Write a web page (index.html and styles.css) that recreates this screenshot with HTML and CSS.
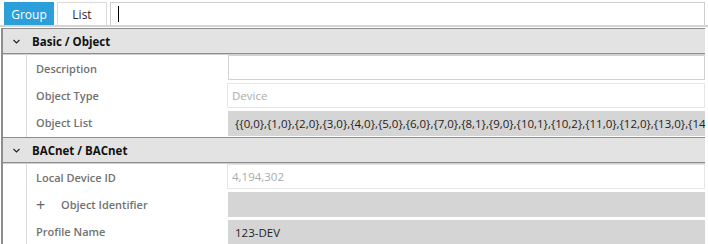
FILE: index.html
```html
<!DOCTYPE html>
<html lang="en">
<head>
    <meta charset="UTF-8">
    <title>Device Properties</title>
    <link rel="stylesheet" href="styles.css">
</head>
<body>
    <div class="toolbar">
        <div class="tab active">Group</div>
        <div class="tab">List</div>
        <div class="search"><span class="caret"></span></div>
    </div>

    <div class="panel">
        <!-- Basic / Object -->
        <div class="section-head">
            <svg class="chevron" width="7" height="5" viewBox="0 0 7 5"><path d="M0.5 1 L3.5 4 L6.5 1" fill="none" stroke="#222" stroke-width="1.1"/></svg>
            <span>Basic / Object</span>
        </div>
        <div class="rows">
            <div class="row">
                <div class="label">Description</div>
                <div class="field edit"></div>
            </div>
            <div class="row">
                <div class="label">Object Type</div>
                <div class="field readonly">Device</div>
            </div>
            <div class="row">
                <div class="label">Object List</div>
                <div class="field gray">{{0,0},{1,0},{2,0},{3,0},{4,0},{5,0},{6,0},{7,0},{8,1},{9,0},{10,1},{10,2},{11,0},{12,0},{13,0},{14,0},{15,0},{16,0},{17,0}}</div>
            </div>
        </div>

        <!-- BACnet / BACnet -->
        <div class="section-head">
            <svg class="chevron" width="7" height="5" viewBox="0 0 7 5"><path d="M0.5 1 L3.5 4 L6.5 1" fill="none" stroke="#222" stroke-width="1.1"/></svg>
            <span>BACnet / BACnet</span>
        </div>
        <div class="rows">
            <div class="row">
                <div class="label">Local Device ID</div>
                <div class="field readonly">4,194,302</div>
            </div>
            <div class="row">
                <div class="label"><span class="plus">+</span>Object Identifier</div>
                <div class="field gray"></div>
            </div>
            <div class="row">
                <div class="label">Profile Name</div>
                <div class="field gray">123-DEV</div>
            </div>
        </div>
    </div>
</body>
</html>
```

FILE: styles.css
```css
body {
    margin: 0;
    font-family: "Open Sans", "Noto Sans", Arial, sans-serif;
    font-size: 11px;
    background-color: #fff;
    color: #222;
    overflow: hidden;
}

.toolbar {
    display: flex;
    gap: 3px;
    height: 27px;
    padding: 2px 3px 0 4px;
    box-sizing: border-box;
    border-bottom: 2px solid #d4d4d4;
}

.tab {
    width: 50px;
    height: 23px;
    box-sizing: border-box;
    display: flex;
    align-items: center;
    justify-content: center;
    border: 1px solid #dadada;
    border-bottom: none;
    font-size: 12px;
    color: #3a2222;
}

.tab.active {
    background-color: #2b9fd9;
    border-color: #2b9fd9;
    color: #fff;
}

.search {
    flex: 1;
    height: 23px;
    box-sizing: border-box;
    border: 1px solid #cfcfcf;
    border-bottom: none;
    padding: 3px 0 0 7px;
}

.caret {
    display: block;
    width: 1px;
    height: 16px;
    background-color: #000;
}

.panel {
    margin: 1px 3px 0 1px;
    border-left: 2px solid #8d8d8d;
}

.section-head {
    display: flex;
    align-items: center;
    height: 24px;
    background-color: #e3e3e3;
    border-top: 1px solid #8d8d8d;
    border-bottom: 1px solid #8d8d8d;
    box-shadow: 0 1px 0 #cfcfcf;
    font-size: 11.5px;
    font-weight: 700;
    color: #111;
}

.chevron {
    margin: 1px 12px 0 10px;
}

.rows {
    display: flex;
    flex-direction: column;
    gap: 3px;
    padding: 1px 0 1px 23px;
}

.row {
    display: flex;
    height: 25px;
}

.label {
    width: 201px;
    flex-shrink: 0;
    display: flex;
    align-items: center;
    padding-left: 9px;
    box-sizing: border-box;
    border-left: 1px solid #dcdcdc;
    margin: -3px 0;
    font-weight: 600;
    color: #727272;
}

.rows .row:first-child .label { margin-top: -1px; }
.rows .row:last-child .label { margin-bottom: -1px; }

.plus {
    font-weight: 400;
    font-size: 16px;
    color: #666;
    width: 25px;
    line-height: 1;
}

.field {
    flex: 1;
    min-width: 0;
    box-sizing: border-box;
    display: flex;
    align-items: center;
    white-space: nowrap;
    overflow: hidden;
    font-size: 11.5px;
}

.field.edit {
    border: 1px solid #d2d2d2;
    margin-left: 1px;
}

.field.readonly {
    border: 1px solid #e6e6e6;
    padding-left: 4px;
    color: #ababab;
}

.field.gray {
    background-color: #d6d5d6;
    margin-left: 1px;
    padding-left: 7px;
    color: #1e1e1e;
}
```
